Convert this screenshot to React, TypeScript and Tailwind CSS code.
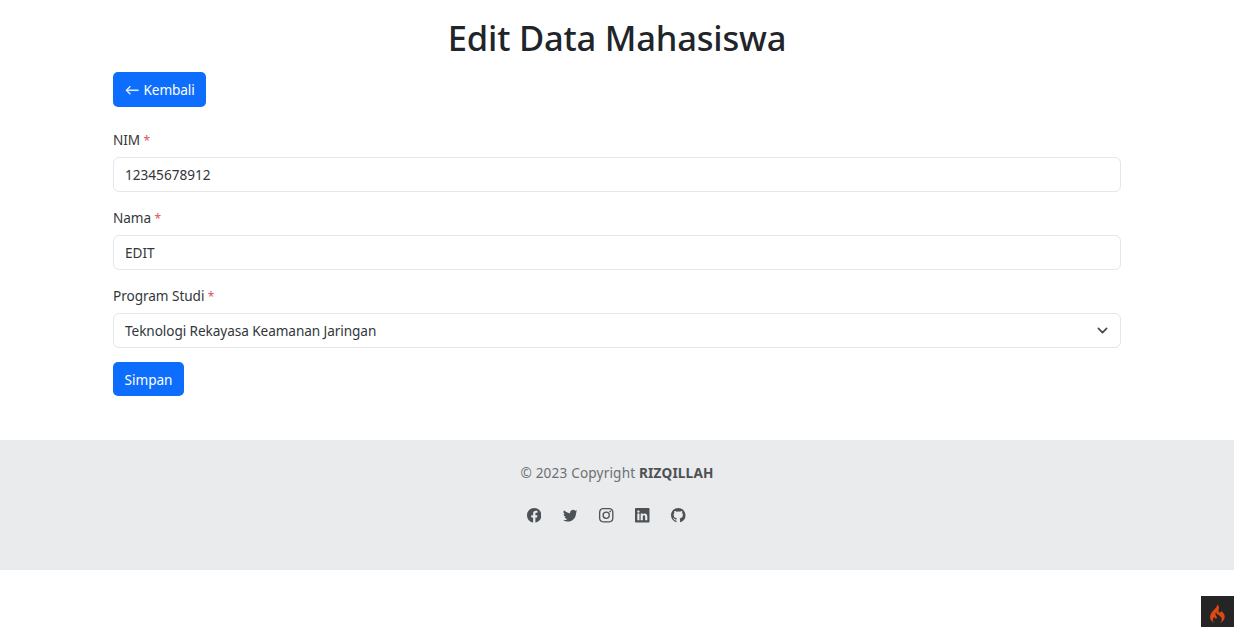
import type { ReactNode } from "react";
import { BsArrowLeft, BsFacebook, BsTwitter, BsInstagram, BsLinkedin, BsGithub } from "react-icons/bs";

function Label({ htmlFor, children }: { htmlFor: string; children: ReactNode }) {
  return (
    <label htmlFor={htmlFor} className="mb-[7px] block h-[21px] leading-[21px] tracking-[-0.05px] text-[#33373b]">
      {children} <span className="text-[12px] text-[#de5360]">*</span>
    </label>
  );
}

function Flame() {
  return (
    <svg viewBox="0 0 155 200" className="mt-[4px] h-[19px] w-[15px]" fill="#dd4814">
      <path d="M73.7 3.7c2.2 7.9-.7 18.5-7.8 29-1.8 2.6-10.7 12.2-19.7 21.3-23.9 24-33.6 37.1-40.3 54.4-7.9 20.6-7.8 40.8.5 58.2C12.8 180 27.6 193 42.5 198l6 2-3-2.2c-21-15.2-22.9-38.7-4.8-58.8 2.5-2.7 4.8-5 5.1-5 .4 0 .7 2.7.7 6.1 0 5.7.2 6.2 3.7 9.5 3 2.7 4.6 3.4 7.8 3.4 5.6 0 9.9-2.4 11.6-6.5 2.9-6.9 1.6-12-5-20.5-10.5-13.4-11.7-23.3-4.3-34.7l3.1-4.8.7 4.7c1.3 8.2 5.8 12.9 25 25.8 20.9 14.1 30.6 26.1 32.8 40.5 1.1 7.2-.1 16.1-3.1 21.8-2.7 5.3-11.2 14.3-16.5 17.4-2.4 1.4-4.3 2.6-4.3 2.8 0 .2 2.4-.4 5.3-1.4 24.1-8.3 42.7-27.1 48.2-48.6 1.9-7.6 1.9-20.2-.1-28.5-3.5-15.2-14.6-30.5-29.9-41.2l-7-4.9-.6 3.3c-.8 4.8-2.6 7.6-5.9 9.3-4.5 2.3-10.3 1.9-13.8-1-6.7-5.7-7.8-14.6-3.7-30.5 3-11.6 3.2-20.6.5-29.1C88.3 18 80.6 6.3 74.8 2.2 73.1.9 73 1 73.7 3.7z" />
    </svg>
  );
}

const control =
  "block h-[35px] w-full rounded-[6px] border border-[#e3e6ea] bg-white px-[11px] text-[#33373b] outline-none";

const socials = [
  { name: "Facebook", Icon: BsFacebook },
  { name: "Twitter", Icon: BsTwitter },
  { name: "Instagram", Icon: BsInstagram },
  { name: "LinkedIn", Icon: BsLinkedin },
  { name: "GitHub", Icon: BsGithub },
];

export default function App() {
  return (
    <div className="flex h-[627px] flex-col overflow-hidden bg-white font-['Noto_Sans',sans-serif] text-[13.6px] text-[#212529]">
      <main className="mx-auto h-[440px] w-[1008px] shrink-0 pt-[16px]">
        <h1 className="mb-[13px] h-[43px] text-center text-[34.5px] leading-[43px] font-medium tracking-[-0.2px]">
          Edit Data Mahasiswa
        </h1>
        <a
          href="#"
          className="flex h-[35px] w-[93px] items-center gap-[4px] rounded-[5px] bg-[#0d6efd] pt-px pl-[12px] text-white"
        >
          <BsArrowLeft className="size-[14.5px]" strokeWidth={0.4} />
          <span className="tracking-[-0.1px]">Kembali</span>
        </a>
        <form className="mt-[22px]" onSubmit={(e) => e.preventDefault()}>
          <div className="h-[78px]">
            <Label htmlFor="nim">NIM</Label>
            <input id="nim" className={control} defaultValue="12345678912" />
          </div>
          <div className="h-[78px]">
            <Label htmlFor="nama">Nama</Label>
            <input id="nama" className={control} defaultValue="EDIT" />
          </div>
          <div className="h-[77px]">
            <Label htmlFor="prodi">Program Studi</Label>
            <div id="prodi" className={control + " flex! items-center justify-between"}>
              <span className="pt-px tracking-[-0.07px]">Teknologi Rekayasa Keamanan Jaringan</span>
              <svg viewBox="0 0 16 16" className="mr-[1.5px] size-[11px]" fill="none" stroke="#43484d" strokeWidth="2.4" strokeLinecap="round" strokeLinejoin="round">
                <path d="m2 5 6 6 6-6" />
              </svg>
            </div>
          </div>
          <button className="h-[34px] w-[71px] rounded-[5px] bg-[#0d6efd] pt-[2px] text-white">Simpan</button>
        </form>
      </main>
      <footer className="flex h-[130px] shrink-0 flex-col items-center bg-[#e9ebed] pt-[22px]">
        <p className="h-[22px] leading-[22px] tracking-[0.17px] text-[#6c7074]">
          © 2023 Copyright <b className="font-bold text-[#4d5154]">RIZQILLAH</b>
        </p>
        <div className="mt-[24px] mr-[21.5px] flex gap-[21.7px]">
          {socials.map(({ name, Icon }) => (
            <a key={name} href="#" aria-label={name} className="text-[#4d5257]">
              <Icon className="size-[14.5px]" />
            </a>
          ))}
        </div>
      </footer>
      <div className="mt-auto flex h-[31px] w-[33px] items-center justify-center self-end bg-[#252525]">
        <Flame />
      </div>
    </div>
  );
}
